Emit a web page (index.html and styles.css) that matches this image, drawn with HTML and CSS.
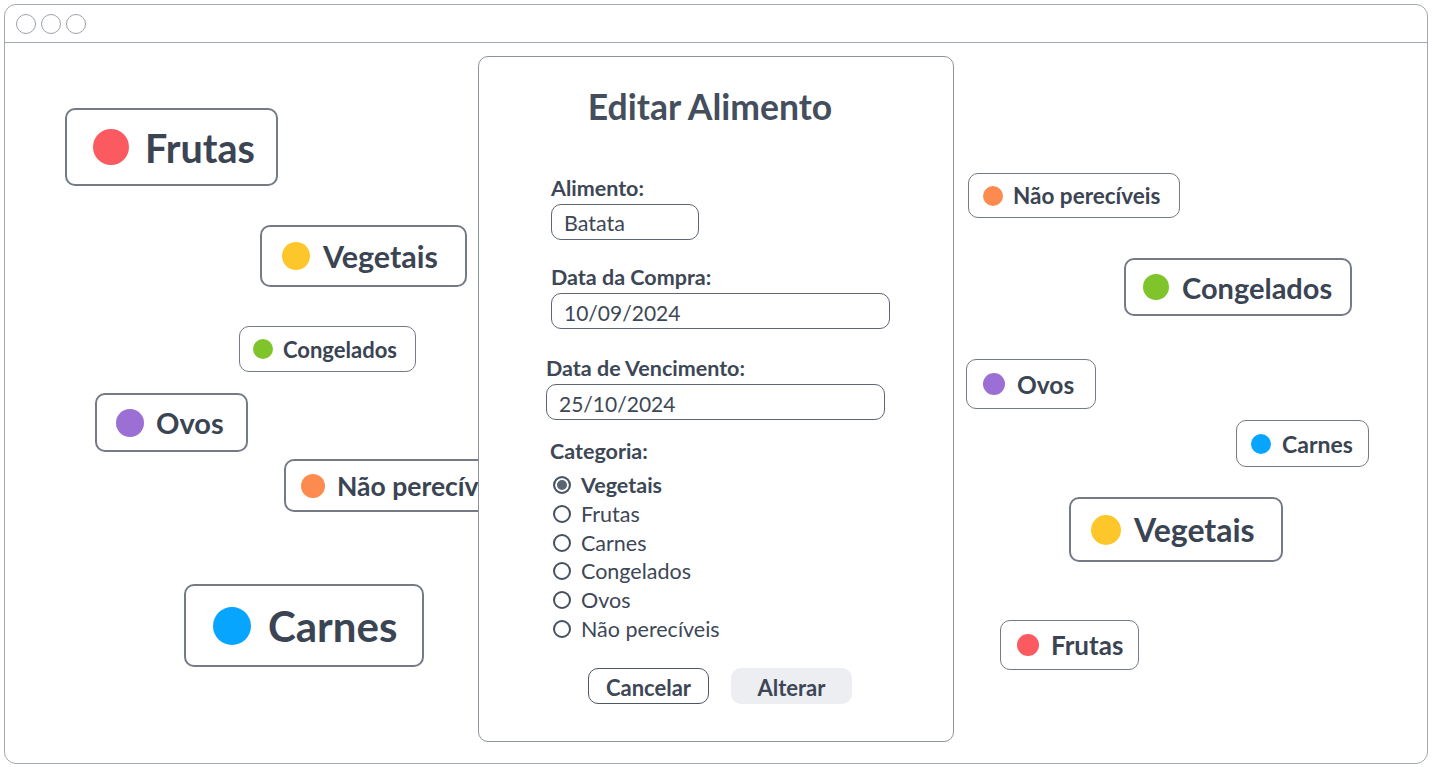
FILE: index.html
```html
<!DOCTYPE html>
<html lang="pt-BR">
<head>
<meta charset="utf-8">
<title>Editar Alimento</title>
<link rel="stylesheet" href="styles.css">
</head>
<body>
<div class="window">
  <div class="titlebar">
    <span class="light"></span><span class="light"></span><span class="light"></span>
  </div>
  <div class="canvas">
    <div class="chip c1"><span class="dot red"></span>Frutas</div>
    <div class="chip c2"><span class="dot yellow"></span>Vegetais</div>
    <div class="chip c3"><span class="dot green"></span>Congelados</div>
    <div class="chip c4"><span class="dot purple"></span>Ovos</div>
    <div class="chip c5"><span class="dot orange"></span>Não perecíveis</div>
    <div class="chip c6"><span class="dot blue"></span>Carnes</div>
    <div class="chip c7"><span class="dot orange"></span>Não perecíveis</div>
    <div class="chip c8"><span class="dot green"></span>Congelados</div>
    <div class="chip c9"><span class="dot purple"></span>Ovos</div>
    <div class="chip c10"><span class="dot blue"></span>Carnes</div>
    <div class="chip c11"><span class="dot yellow"></span>Vegetais</div>
    <div class="chip c12"><span class="dot red"></span>Frutas</div>

    <div class="modal">
      <h1 class="modal-title">Editar Alimento</h1>
      <form class="form">
        <div class="field">
          <label class="label">Alimento:</label>
          <div class="input input-short">Batata</div>
        </div>
        <div class="field">
          <label class="label">Data da Compra:</label>
          <div class="input">10/09/2024</div>
        </div>
        <div class="field field-shift">
          <label class="label">Data de Vencimento:</label>
          <div class="input">25/10/2024</div>
        </div>
        <div class="field field-cat">
          <span class="label">Categoria:</span>
          <ul class="radios">
            <li class="radio checked"><span class="radio-mark"></span>Vegetais</li>
            <li class="radio"><span class="radio-mark"></span>Frutas</li>
            <li class="radio"><span class="radio-mark"></span>Carnes</li>
            <li class="radio"><span class="radio-mark"></span>Congelados</li>
            <li class="radio"><span class="radio-mark"></span>Ovos</li>
            <li class="radio"><span class="radio-mark"></span>Não perecíveis</li>
          </ul>
        </div>
        <div class="actions">
          <span class="btn btn-outline">Cancelar</span>
          <span class="btn btn-fill">Alterar</span>
        </div>
      </form>
    </div>
  </div>
</div>
</body>
</html>
```
FILE: styles.css
```css
* { box-sizing: border-box; }
html, body { margin: 0; padding: 0; background: #ffffff; }
body {
  font-family: Lato, "Open Sans", "Liberation Sans", sans-serif;
  color: #3b4555;
  width: 1432px;
  height: 767px;
  overflow: hidden;
}

.window {
  position: relative;
  margin: 4px 0 0 4px;
  width: 1424px;
  height: 760px;
  border: 1px solid #a3a9b3;
  border-radius: 12px;
  background: #fff;
  overflow: hidden;
}

.titlebar {
  height: 38px;
  border-bottom: 1px solid #a3a9b3;
  display: flex;
  align-items: center;
  gap: 5px;
  padding: 0 0 0 11px;
}
.light {
  width: 20px;
  height: 20px;
  border-radius: 50%;
  border: 1.5px solid #9ba2ad;
}

.canvas { position: relative; height: 720px; }

.chip {
  position: absolute;
  display: flex;
  align-items: center;
  border: 2px solid #747b87;
  border-radius: 10px;
  background: #fff;
  font-weight: 700;
  color: #3a4453;
  white-space: nowrap;
  overflow: hidden;
}
.dot { border-radius: 50%; flex: none; }
.red { background: #fb5b60; }
.yellow { background: #fdc72b; }
.green { background: #7fc42b; }
.purple { background: #9c6fd5; }
.orange { background: #fd8b4f; }
.blue { background: #08a5fe; }

/* positions on the canvas (canvas origin = page x 5, y 43) */
.c1 { left: 60px; top: 65px; width: 213px; height: 78px; padding-left: 26px; gap: 16px; font-size: 39.5px; }
.c1 .dot { width: 36px; height: 36px; }
.c2 { left: 255px; top: 182px; width: 207px; height: 62px; padding-left: 20px; gap: 13px; font-size: 30.5px; }
.c2 .dot { width: 28px; height: 28px; }
.c3 { left: 234px; top: 283px; width: 177px; height: 46px; padding-left: 13px; gap: 10px; font-size: 22px; border-width: 1.5px; }
.c3 .dot { width: 20px; height: 20px; }
.c4 { left: 90px; top: 350px; width: 153px; height: 59px; padding-left: 19px; gap: 12px; font-size: 29px; }
.c4 .dot { width: 28px; height: 28px; }
.c5 { left: 279px; top: 416px; width: 240px; height: 53px; padding-left: 15px; gap: 12px; font-size: 26.5px; }
.c5 .dot { width: 24px; height: 24px; }
.c6 { left: 179px; top: 541px; width: 240px; height: 83px; padding-left: 27px; gap: 17px; font-size: 42px; }
.c6 .dot { width: 38px; height: 38px; }
.c7 { left: 963px; top: 130px; width: 212px; height: 45px; padding-left: 14px; gap: 10px; font-size: 22.5px; border-width: 1.5px; }
.c7 .dot { width: 20px; height: 20px; }
.c8 { left: 1119px; top: 215px; width: 228px; height: 58px; padding-left: 17px; gap: 13px; font-size: 29px; }
.c8 .dot { width: 26px; height: 26px; }
.c9 { left: 961px; top: 316px; width: 130px; height: 50px; padding-left: 16px; gap: 12px; font-size: 24.5px; border-width: 1.5px; }
.c9 .dot { width: 22px; height: 22px; }
.c10 { left: 1231px; top: 377px; width: 133px; height: 47px; padding-left: 14px; gap: 11px; font-size: 23px; border-width: 1.5px; }
.c10 .dot { width: 20px; height: 20px; }
.c11 { left: 1064px; top: 454px; width: 214px; height: 65px; padding-left: 20px; gap: 13px; font-size: 32px; }
.c11 .dot { width: 30px; height: 30px; }
.c12 { left: 995px; top: 577px; width: 139px; height: 50px; padding-left: 16px; gap: 12px; font-size: 26px; border-width: 1.5px; }
.c12 .dot { width: 22px; height: 22px; }

/* modal */
.modal {
  position: absolute;
  left: 473px;
  top: 13px;
  width: 476px;
  height: 686px;
  z-index: 2;
  background: #fff;
  border: 1px solid #8d939d;
  border-radius: 10px;
  padding-top: 30px;
}
.modal-title {
  margin: 0;
  text-align: center;
  font-size: 35.5px;
  line-height: 40px;
  font-weight: 700;
  color: #444e5c;
  padding-right: 12px;
}

.form {
  margin: 49px 0 0;
  padding-left: 72px;
  display: flex;
  flex-direction: column;
}
.field { display: flex; flex-direction: column; align-items: flex-start; margin-bottom: 25px; }
.field-shift { margin-left: -5px; margin-bottom: 19px; }
.field + .field-shift { margin-top: 2px; }
.field-cat { margin-left: -1px; margin-bottom: 0; }
.label {
  font-size: 21.5px;
  line-height: 24px;
  font-weight: 700;
  color: #3d4756;
  margin-bottom: 4px;
}
.input {
  width: 339px;
  height: 36px;
  border: 1.5px solid #5d6674;
  border-radius: 10px;
  padding: 0 12px;
  display: flex;
  align-items: center;
  font-size: 21px;
  color: #3d4756;
  padding-top: 2px;
}
.input-short { width: 148px; font-size: 21.5px; }

.radios {
  list-style: none;
  margin: 3.5px 0 0;
  padding: 0 0 0 3px;
}
.radio {
  display: flex;
  align-items: center;
  gap: 10px;
  height: 29px;
  font-size: 21.5px;
  color: #3d4756;
}
.radio + .radio { height: 28.8px; }
.radio-mark {
  width: 18px;
  height: 18px;
  border-radius: 50%;
  border: 2px solid #465060;
  flex: none;
}
.checked { font-weight: 700; }
.checked .radio-mark {
  border-color: #4a5463;
  background: #5a6472;
  box-shadow: inset 0 0 0 2px #ffffff;
}

.actions {
  display: flex;
  gap: 22px;
  margin: 25px 0 0 37px;
}
.btn {
  height: 36px;
  width: 121px;
  display: flex;
  align-items: center;
  justify-content: center;
  border-radius: 10px;
  font-size: 22px;
  font-weight: 700;
  color: #3d4756;
  padding-top: 3px;
}
.btn-outline { border: 1.5px solid #4d5765; }
.btn-fill { background: #eceef1; }
```
